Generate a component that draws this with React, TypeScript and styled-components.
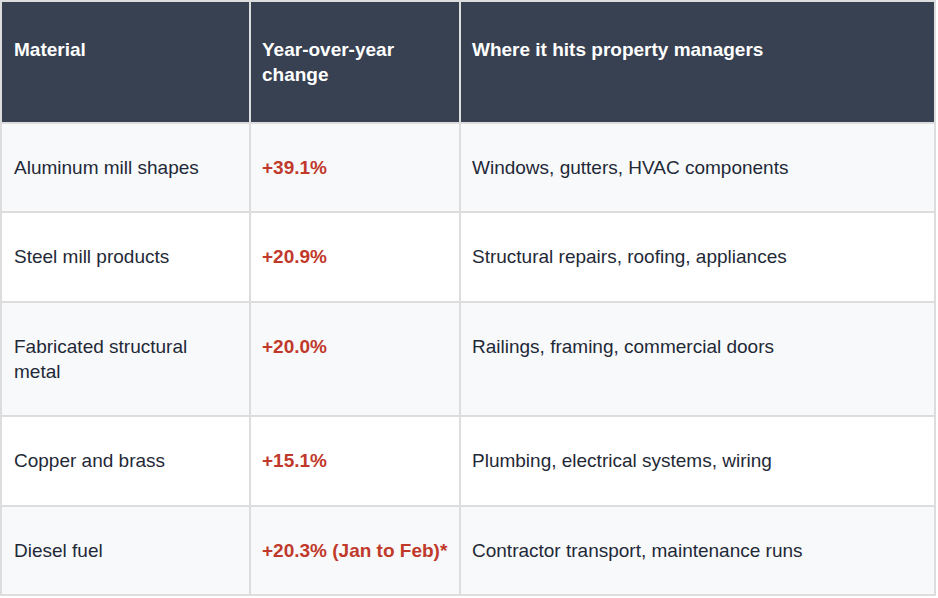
import React from 'react';
import styled, { createGlobalStyle } from "styled-components";

type RowType = {
  material: string
  change: string
  where: string
}

const rows: RowType[] = [
  { material: 'Aluminum mill shapes', change: '+39.1%', where: 'Windows, gutters, HVAC components' },
  { material: 'Steel mill products', change: '+20.9%', where: 'Structural repairs, roofing, appliances' },
  { material: 'Fabricated structural metal', change: '+20.0%', where: 'Railings, framing, commercial doors' },
  { material: 'Copper and brass', change: '+15.1%', where: 'Plumbing, electrical systems, wiring' },
  { material: 'Diesel fuel', change: '+20.3% (Jan to Feb)*', where: 'Contractor transport, maintenance runs' },
]

const App = () => {
  return (
    <>
      <GlobalStyle />
      <Table>
        <colgroup>
          <col style={{ width: 249 }} />
          <col style={{ width: 210 }} />
          <col />
        </colgroup>
        <thead>
          <tr>
            <HeadCell>Material</HeadCell>
            <HeadCell>Year-over-year change</HeadCell>
            <HeadCell>Where it hits property managers</HeadCell>
          </tr>
        </thead>
        <tbody>
          {rows.map((r, i) => (
            <Row key={r.material} striped={i % 2 === 0}>
              <MaterialCell>{r.material}</MaterialCell>
              <ChangeCell>{r.change}</ChangeCell>
              <Cell>{r.where}</Cell>
            </Row>
          ))}
        </tbody>
      </Table>
    </>
  );
};

export default App;

const GlobalStyle = createGlobalStyle`
  body {
    margin: 0;
    background: #ffffff;
    font-family: "Liberation Sans", Arial, sans-serif;
  }
`
const Table = styled.table`
  width: 936px;
  border-collapse: collapse;
  table-layout: fixed;
  border: 2px solid #dddddd;
  font-size: 19px;
  line-height: 25px;
`
const HeadCell = styled.th`
  background: #374151;
  color: #ffffff;
  font-weight: bold;
  text-align: left;
  vertical-align: top;
  padding: 35px 10px 34.5px 11px;
  border: 2px solid #dddddd;

  &:first-child {
    padding-left: 12px;
  }
`
const Row = styled.tr<{ striped: boolean }>`
  background: ${props => props.striped ? '#f8f9fb' : '#ffffff'};
`
const Cell = styled.td`
  color: #1f2937;
  vertical-align: top;
  padding: 31px 10px 31.5px 11px;
  border: 2px solid #dddddd;
`
const MaterialCell = styled(Cell)`
  padding-left: 12px;
  padding-right: 16px;
`
const ChangeCell = styled(Cell)`
  color: #c0392b;
  font-weight: bold;
`
